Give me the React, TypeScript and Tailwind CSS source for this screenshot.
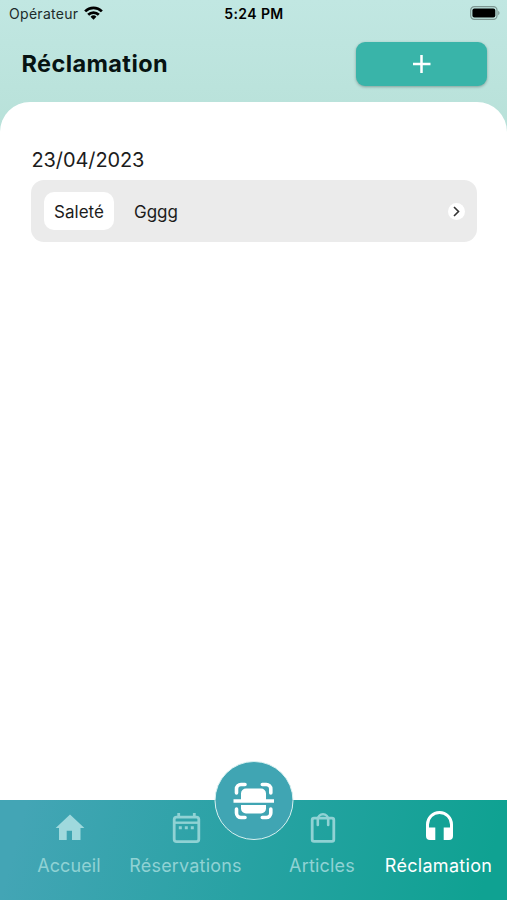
import React from "react";

interface Complaint {
  date: string
  type: string
  message: string
}

interface NavItemProps {
  label: string
  active?: boolean
  textClass: string
  children: React.ReactNode
}

const complaints: Complaint[] = [
  { date: "23/04/2023", type: "Saleté", message: "Gggg" },
];

const StatusBar = () => {
  return (
    <div className="grid grid-cols-3 items-center h-[26px] pl-[9px] pr-[7px] text-black">
      <div className="flex items-center gap-[6px]">
        <span className="text-[14px] tracking-[0.3px] text-[#1c2b2a]">Opérateur</span>
        <svg width="19" height="14" viewBox="0 0 20 14" fill="none" stroke="currentColor" strokeWidth="2.9">
          <path d="M1.2 5.3a12.6 12.6 0 0 1 17.6 0" />
          <path d="M4.4 8.8a8 8 0 0 1 11.2 0" />
          <path d="M10 14 6.9 11a4.4 4.4 0 0 1 6.2 0z" fill="currentColor" stroke="none" />
        </svg>
      </div>
      <span className="-ml-px text-center text-[14px] font-semibold tracking-[0.4px]">5:24 PM</span>
      <svg className="justify-self-end" width="30" height="14" viewBox="0 0 30 14">
        <rect x="0.7" y="0.7" width="26.3" height="12.6" rx="3.6" fill="none" stroke="#7d9793" strokeWidth="1.2" />
        <rect x="2.4" y="2.4" width="22.9" height="9.2" rx="2" fill="#000" />
        <path d="M28.2 4.8c1.8.8 1.8 3.6 0 4.4z" fill="#7d9793" />
      </svg>
    </div>
  );
}

const NavItem = ({ label, active, textClass, children }: NavItemProps) => {
  return (
    <button className={`flex w-[116px] flex-col items-center pt-1 ${active ? "text-white" : "text-[#90d2d4]"}`}>
      <svg width="44" height="44" viewBox="0 0 44 44" fill="none" stroke="currentColor">
        {children}
      </svg>
      <span className={`mt-[6px] whitespace-nowrap text-[18px] leading-6 ${textClass}`}>{label}</span>
    </button>
  );
}

const App = () => {
  return (
    <div className="relative flex h-[900px] w-full flex-col overflow-hidden bg-[linear-gradient(#c1e7e2,#b8e1d9_130px)] font-['Inter','Liberation_Sans',sans-serif]">
      <StatusBar />

      <header className="flex h-[76px] items-start justify-between pl-[21.5px] pr-5 pt-[16px]">
        <h1 className="pt-[5px] text-[23.5px] font-bold leading-[33px] tracking-[0.4px] text-[#071312]">Réclamation</h1>
        <button className="flex h-11 w-[131px] items-center justify-center rounded-[9px] bg-[#39b4a9] shadow-[0_1px_3px_rgba(0,0,0,0.3)]">
          <svg width="18" height="18" viewBox="0 0 18 18" stroke="white" strokeWidth="2.5">
            <path d="M8.5 0v18M0 9h17.5" />
          </svg>
        </button>
      </header>

      <main className="flex-1 rounded-t-[30px] bg-white px-[31px] pt-[44px] text-[#1c1c1c]">
        {complaints.map((complaint, index) => (
          <section key={index}>
            <h2 className="pl-[0.5px] text-[20px] leading-7 tracking-[-0.1px]">{complaint.date}</h2>
            <div className="mt-[6px] flex h-[62px] w-[446px] items-center rounded-[13px] bg-[#ebebeb] pl-[13px] pr-[12.5px] text-[17px]">
              <span className="flex h-[38px] w-[70px] items-center justify-center rounded-[10px] bg-white pt-[3px]">{complaint.type}</span>
              <span className="ml-[20px] pt-[3px]">{complaint.message}</span>
              <span className="ml-auto flex size-[17px] items-center justify-center rounded-full bg-white">
                <svg width="7" height="11" viewBox="0 0 7 11" fill="none" stroke="#333" strokeWidth="1.6">
                  <path d="M1 1l4.5 4.5L1 10" />
                </svg>
              </span>
            </div>
          </section>
        ))}
      </main>

      <nav className="flex h-[100px] justify-between bg-[linear-gradient(105deg,#43a5b5_5%,#27a2a3_50%,#0fa292_95%)] px-[11px]">
        <div className="flex">
          <NavItem label="Accueil" textClass="tracking-[0.1px]">
            <path d="M23 10.5 8.7 24H12v12h7.700v-9.300H25V36h8.500V24h3.900z" fill="#9fd9dd" stroke="none" />
          </NavItem>
          <NavItem label="Réservations" textClass="pl-px tracking-[0.18px]">
            <rect x="11.2" y="13.2" width="24.6" height="24.4" rx="2.4" strokeWidth="2.8" />
            <path d="M11 18.7h25" strokeWidth="2.4" />
            <path d="M15.7 9v4M31.3 9v4" strokeWidth="2.8" />
            <path d="M15.8 23.8h3M21.8 23.8h3M27.8 23.8h3" strokeWidth="3" />
          </NavItem>
        </div>
        <div className="flex">
          <NavItem label="Articles" textClass="tracking-[0.2px]">
            <rect x="12.2" y="14.2" width="21.6" height="23.2" rx="1.8" strokeWidth="2.8" />
            <path d="M17.8 21v-5.5a5.2 5.2 0 0 1 10.400 0V21" strokeWidth="2.6" strokeLinecap="round" />
          </NavItem>
          <NavItem label="Réclamation" active textClass="pl-px tracking-[0.3px]">
            <path d="M11.5 30v-9.5a12 12 0 0 1 24 0V30" strokeWidth="3" />
            <path d="M10 23.5h9.3V36H14a4 4 0 0 1-4-4zM37 23.5h-9.3V36H33a4 4 0 0 0 4-4z" fill="currentColor" stroke="none" />
          </NavItem>
        </div>
      </nav>

      {/* scan button sits over the nav edge */}
      <button className="absolute bottom-[60px] left-1/2 flex size-[79px] -translate-x-1/2 items-center justify-center rounded-full border border-[#d9f1f1] bg-[#40a5b3]">
        <svg width="42" height="38" viewBox="0 0 42 38" fill="none" stroke="white" strokeWidth="3.6" strokeLinecap="round">
          <path d="M4 11V7a4.5 4.5 0 0 1 4.5-4.5h4M29.8 2.500h4A4.5 4.5 0 0 1 38.3 7v4M4 27v4a4.5 4.5 0 0 0 4.5 4.500h4M29.8 35.500h4a4.500 4.500 0 0 0 4.500-4.500v-4" />
          <path d="M1 19h40.5" strokeLinecap="butt" />
          <path d="M8.5 19v-7.500a5 5 0 0 1 5-5h15a5 5 0 0 1 5 5V19zM8.5 23h25v3.500a5 5 0 0 1-5 5h-15a5 5 0 0 1-5-5z" fill="white" stroke="none" />
        </svg>
      </button>
    </div>
  );
}
export default App;
